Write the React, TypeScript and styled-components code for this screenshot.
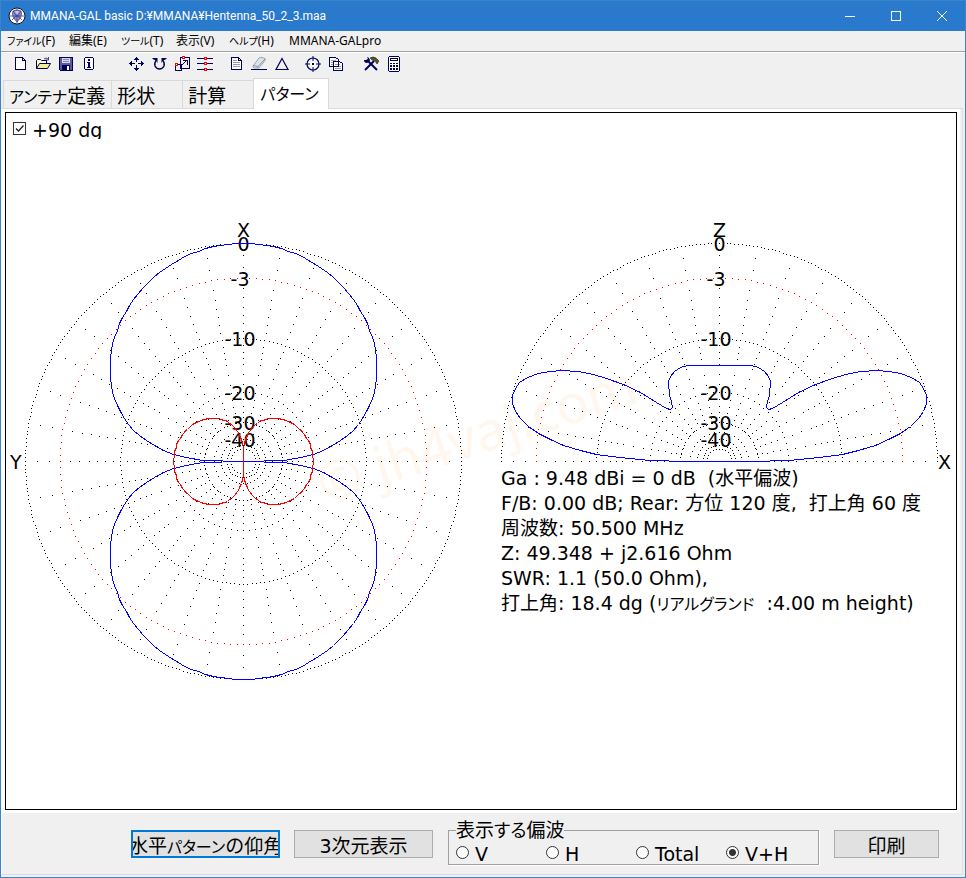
import React from "react";
import styled, { createGlobalStyle } from "styled-components";

const GlobalStyle = createGlobalStyle`
  *, *::before, *::after { box-sizing: border-box; }
  body { margin: 0; background: #f0f0f0; }
  button, input, fieldset, legend { font: inherit; color: inherit; }
`;

const uiFont = `"Noto Sans", "Noto Sans CJK JP", sans-serif`;
const dialogFont = `"DejaVu Sans", "Noto Sans CJK JP", sans-serif`;
const navy = "#000058";

const Window = styled.div`
  display: flex;
  flex-direction: column;
  min-height: 100vh;
  border: 1px solid #3a84cc;
  background: #f0f0f0;
  color: #000;
  font-family: ${dialogFont};
  font-size: 19px;
`;

const TitleBar = styled.header`
  display: flex;
  align-items: center;
  height: 30px;
  padding-left: 7px;
  background: #2979cc;
  color: #fff;
`;

const Title = styled.h1`
  flex: 1;
  margin: 0 0 0 4px;
  font: 400 12px/30px Roboto, "Noto Sans", sans-serif;
  white-space: nowrap;
`;

const CaptionButton = styled.button`
  display: grid;
  place-items: center;
  width: 46px;
  height: 30px;
  padding: 0;
  border: 0;
  background: none;
`;

const MenuBar = styled.nav`
  display: flex;
  gap: 14px;
  height: 21px;
  padding: 0 6px;
  border-bottom: 1px solid #a0a0a0;
  font: 12px/18px ${uiFont};
`;

const MenuItem = styled.button<{ $width: number }>`
  width: ${(p) => p.$width}px;
  padding: 0;
  border: 0;
  background: none;
  text-align: left;
  white-space: nowrap;
`;

const ToolBar = styled.div`
  display: flex;
  height: 26px;
  padding: 2px 0 0 7px;
  border-top: 1px solid #fff;
`;

const ToolGroup = styled.div<{ $gap: number }>`
  display: flex;
  margin-right: ${(p) => p.$gap}px;
`;

const ToolButton = styled.button`
  display: grid;
  place-items: center;
  width: 23px;
  height: 18px;
  padding: 0;
  border: 0;
  background: none;
`;

const TabList = styled.div`
  display: flex;
  align-items: flex-end;
  height: 30px;
  padding-left: 2px;
`;

const Tab = styled.button<{ $active?: boolean }>`
  min-width: ${(p) => (p.$active ? 76 : 71)}px;
  height: ${(p) => (p.$active ? 31 : 28)}px;
  margin-bottom: ${(p) => (p.$active ? -1 : 0)}px;
  padding: 0 6px ${(p) => (p.$active ? 3 : 0)}px;
  border: 1px solid #d9d9d9;
  border-bottom: 0;
  border-left-width: ${(p) => (p.$active ? 1 : 0)}px;
  border-right-width: ${(p) => (p.$active ? 1 : 0)}px;
  box-shadow: ${(p) => (p.$active ? "none" : "inset 1px 0 #d9d9d9")};
  background: ${(p) => (p.$active ? "#fff" : "#f0f0f0")};
  z-index: ${(p) => (p.$active ? 1 : 0)};
  text-align: left;
  white-space: nowrap;
`;

const TabPanel = styled.main`
  display: flex;
  flex: 1;
  flex-direction: column;
  margin: 0 2px 2px 0;
  border: 1px solid #dcdcdc;
  border-left-color: #fff;
  background: #f0f0f0;
`;

const Canvas = styled.section`
  position: relative;
  flex: 1;
  border: 1px solid #000;
  background: #fff;
  outline: 3px solid #fff;
  margin: 3px 5px 0 3px;
`;

const CheckLabel = styled.label`
  display: flex;
  gap: 5px;
  height: 26px;
  padding: 5px 0 0 7px;
  overflow: hidden;
  line-height: 24px;
`;

const CheckBox = styled.input`
  appearance: none;
  width: 13px;
  height: 13px;
  margin: 4px 0 0;
  border: 1px solid #333;
  background: #fff;
`;

const CheckStack = styled.span`
  display: grid;
  width: 14px;
  height: 18px;
  > * { grid-area: 1 / 1; }
  > svg { margin: 4px 0 0; pointer-events: none; z-index: 1; }
`;

const Plots = styled.div`
  display: grid;
  grid-template-columns: 482fr 468fr;
  padding-top: 81px;
`;

const Chart = styled.svg`
  display: block;
  width: 100%;
  overflow: visible;
  font-family: ${dialogFont};
  font-size: 19px;
`;

const Results = styled.div`
  padding-left: 13px;
  line-height: 25px;
  white-space: pre;
`;

const ResultLine = styled.p`
  margin: 0;
`;

const Kana = styled.span<{ $size?: number }>`
  font-size: ${(p) => p.$size ?? 16}px;
  font-feature-settings: "palt";
`;

const Watermark = styled.div`
  position: absolute;
  left: 32%;
  top: 290px;
  transform: rotate(-18deg);
  transform-origin: center;
  color: rgba(255, 128, 0, 0.07);
  font: 54px/60px "Noto Sans", sans-serif;
  white-space: nowrap;
  pointer-events: none;
`;

const Footer = styled.footer`
  display: flex;
  align-items: flex-start;
  height: 61px;
  margin-top: 3px;
  padding: 7px 0 0 129px;
`;

const PushButton = styled.button<{ $width: number; $focus?: boolean }>`
  display: flex;
  flex: none;
  align-items: center;
  justify-content: center;
  width: ${(p) => p.$width}px;
  height: 28px;
  margin-top: 10px;
  margin-right: 14px;
  padding: 0;
  overflow: hidden;
  border: ${(p) => (p.$focus ? "2px solid #0078d7" : "1px solid #adadad")};
  background: #e1e1e1;
  white-space: nowrap;
`;

const GroupBox = styled.fieldset`
  display: flex;
  flex: none;
  width: 371px;
  height: 45px;
  margin: 0 15px 0 1px;
  padding: 0 0 0 7px;
  border: 1px solid #a0a0a0;
  box-shadow: 1px 1px #fff;
`;

const GroupTitle = styled.legend`
  padding: 0;
  line-height: 20px;
`;

const RadioLabel = styled.label`
  display: flex;
  align-items: center;
  gap: 6px;
  width: 90px;
  height: 25px;
  line-height: 24px;
`;

const Radio = styled.input`
  appearance: none;
  flex: none;
  width: 13px;
  height: 13px;
  margin: 0 0 2px;
  border: 1px solid #333;
  border-radius: 50%;
  background: #fff;
  &:checked {
    background: radial-gradient(circle, #333 0 3px, #fff 4px);
  }
`;

/* ---------- polar chart geometry ---------- */

type Point = [number, number];
const RADIUS = 218;
const dbRadius = (db: number) => RADIUS * Math.exp(-0.0575 * db);
const rad = (deg: number) => (deg * Math.PI) / 180;

const dotPath = (points: Point[]) =>
  points.map(([x, y]) => `M${Math.floor(x)} ${Math.floor(y)}h1v1h-1z`).join("");

const ring = (cx: number, cy: number, db: number, step: number, sweep: number) => {
  const points: Point[] = [];
  for (let a = 0; a <= sweep; a += step) {
    points.push([cx + dbRadius(db) * Math.cos(rad(a)), cy - dbRadius(db) * Math.sin(rad(a))]);
  }
  return points;
};

const gridDots = (cx: number, cy: number, sweep: number) => {
  const points: Point[] = [
    ...ring(cx, cy, 0, 1, sweep),
    ...ring(cx, cy, 10, 2, sweep),
    ...ring(cx, cy, 20, 5, sweep),
    ...ring(cx, cy, 30, 6, sweep),
    ...ring(cx, cy, 40, 10, sweep),
    ...ring(cx, cy, 50, 15, sweep),
  ];
  for (let a = 0; a <= sweep; a += 10) {
    for (let db = 1; db < 50; db += db < 14 ? 1 : db < 30 ? 2 : 5) {
      const r = dbRadius(db);
      points.push([cx + r * Math.cos(rad(a)), cy - r * Math.sin(rad(a))]);
    }
  }
  return points;
};

const lobes = (cx: number, cy: number, horizontal: boolean) => {
  const points: string[] = [];
  for (let a = 0; a <= 360; a += 2) {
    const c = Math.abs(Math.cos(rad(a)));
    const shape = 1 - 0.03 * Math.sin(rad(2 * a)) ** 2;
    const r = RADIUS * Math.sqrt(c * (horizontal ? 0.102 : shape));
    const along = r * Math.cos(rad(a));
    const across = r * Math.sin(rad(a));
    const [x, y] = horizontal ? [along, across] : [across, -along];
    points.push(`${cx + Math.round(x)},${cy + Math.round(y)}`);
  }
  return points.join(" ");
};

const elevationHalf: Point[] = [
  [0, 0], [-33, 0], [-69, -1], [-100, -4], [-123, -7], [-139, -11], [-156, -16],
  [-169, -22], [-181, -28], [-191, -35], [-199, -43], [-204, -50], [-207, -58],
  [-207, -66], [-204, -73], [-200, -79], [-192, -84], [-181, -88], [-169, -90],
  [-158, -91], [-141, -90], [-126, -87], [-113, -83], [-96, -77], [-79, -69],
  [-63, -59], [-53, -53], [-49, -52], [-47, -54], [-48, -60], [-50, -66],
  [-51, -80], [-49, -85], [-45, -90], [-39, -94], [-32, -96], [0, -96],
];

const elevation = (cx: number, cy: number) =>
  [...elevationHalf, ...elevationHalf.map(([x, y]): Point => [-x, y]).reverse()]
    .map(([x, y]) => `${cx + x},${cy + y}`)
    .join(" ");

const levels: [string, number][] = [
  ["0", 0], ["-3", 3], ["-10", 10], ["-20", 20], ["-30", 30], ["-40", 40],
];

const LevelLabels = ({ cx, cy, axis }: { cx: number; cy: number; axis: string }) => (
  <g>
    <text x={cx} y={cy - 225} textAnchor="middle">{axis}</text>
    {levels.map(([label, db]) => (
      <text key={label} x={cx + (db < 10 ? 6 : 12)} y={cy - Math.round(dbRadius(db)) + 7} textAnchor="end">
        {label}
      </text>
    ))}
  </g>
);

const AzimuthChart = () => {
  const cx = 237.5;
  const cy = 241.5;
  return (
    <Chart viewBox="0 0 482 470" role="img" aria-label="X-Y">
      <g shapeRendering="crispEdges">
        <path d={dotPath(gridDots(cx, cy, 359))} fill="#000" />
        <path d={dotPath(ring(cx, cy, 3, 2, 359))} fill="#f00" />
      </g>
      <LevelLabels cx={cx} cy={cy} axis="X" />
      <text x="4" y="249">Y</text>
      <g fill="none" shapeRendering="crispEdges">
        <polyline points={lobes(cx, cy, false)} stroke="#00f" />
        <polyline points={lobes(cx, cy, true)} stroke="#f00" />
      </g>
    </Chart>
  );
};

const ElevationChart = () => {
  const cx = 231.5;
  const cy = 241.5;
  return (
    <Chart viewBox="0 0 468 246" role="img" aria-label="X-Z">
      <g shapeRendering="crispEdges">
        <path d={dotPath(gridDots(cx, cy, 180))} fill="#000" />
        <path d={dotPath(ring(cx, cy, 3, 2, 180))} fill="#f00" />
      </g>
      <LevelLabels cx={cx} cy={cy} axis="Z" />
      <text x="450" y="249">X</text>
      <polyline points={elevation(cx, cy)} fill="none" stroke="#00f" shapeRendering="crispEdges" />
    </Chart>
  );
};

/* ---------- icons ---------- */

const Icon = ({ children, smooth }: { children: React.ReactNode; smooth?: boolean }) => (
  <svg width="16" height="16" viewBox="0 0 16 16" fill="none" stroke={navy} shapeRendering={smooth ? "auto" : "crispEdges"} aria-hidden="true">
    {children}
  </svg>
);

const icons: Record<string, React.ReactNode> = {
  新規: <Icon><path d="M3.5 1.5h7l3 3v9h-10zM10.5 1.5v3h3" fill="#fff" /></Icon>,
  開く: (
    <Icon smooth>
      <path d="M1.5 12.5v-8l1-1h3l1 1h5v3" fill="#ffffc0" />
      <path d="M1.5 12.5l3-5h11l-3 5z" fill="#f4f09a" />
      <path d="M9 3q2-2 4 0M13.5 1v3h-3" strokeWidth=".7" />
    </Icon>
  ),
  保存: (
    <Icon>
      <path d="M1.5 1.5h13v13h-12l-1-1z" fill="#5a5a9c" />
      <path d="M4 2h8v5H4z" fill="#d8d8e8" stroke="none" />
      <path d="M5 3.5h6M5 5.5h6" stroke="#8888a8" />
      <path d="M4 9h8v5H4z" fill={navy} stroke="none" />
      <path d="M9 10h2v4H9z" fill="#fff" stroke="none" />
    </Icon>
  ),
  情報: (
    <Icon>
      <path d="M4.5 1.5h7l1 1v10l-1 1h-7l-1-1v-10z" fill="#fff" />
      <path d="M7 3h2v2H7zM6 6h3v5h1v1H6v-1h1V7H6z" fill={navy} stroke="none" />
    </Icon>
  ),
  移動: (
    <Icon>
      <path d="M8.5 1v5M8.5 9v6M1 7.5h6M10 7.5h6M7 2.5h3M6 3.5h5M7 13.5h3M6 12.5h5M2.5 6v3M3.5 5v5M14.5 6v3M13.5 5v5" />
    </Icon>
  ),
  回転: (
    <Icon smooth>
      <path d="M5.500 4q-2.500 3-1.500 6 1.500 3 4.500 3t4.500-3q1-3-1.500-6" strokeWidth="1.400" />
      <path d="M1 2h5.500v5L5 4.500 2.500 3.500zM16 2h-5.500v5L12 4.500l2.500-1z" fill={navy} stroke="none" />
    </Icon>
  ),
  拡大: (
    <Icon>
      <path d="M6.500 1.500h9v11h-9zM1.500 8.500h6v6h-6z" />
      <path d="M8 9l4-4M9 4.500h4v4" />
      <path d="M8.500.5h2v2h-2zM1.500 7.500h2v2h-2z" fill="#fff" stroke="#f00" />
    </Icon>
  ),
  要素: (
    <Icon>
      <path d="M0 2.500h16M0 7.500h16M0 13.500h16" />
      <path d="M7.500 1.500h2v2h-2zM7.500 6.500h2v2h-2zM7.500 12.500h2v2h-2z" fill="#fff" stroke="#f00" />
    </Icon>
  ),
  文書: (
    <Icon>
      <path d="M3.500 1.500h7l3 3v9h-10zM10.500 1.500v3h3" fill="#fff" />
      <path d="M5 4.500h4M5 6.500h7M5 8.500h7M5 10.500h7" stroke="#9a9ab8" />
    </Icon>
  ),
  消去: (
    <Icon smooth>
      <path d="M2 10l6-8q1-1 3-.5l3 1q1 .5 0 2l-6 7.500H3.500q-2-.5-1.500-2z" fill="#dce4e8" stroke="#99a6ae" />
      <path d="M2 9.500l5 1L14 3M7 10.500v1.500" stroke="#8895a0" />
      <path d="M0 13.500h16" />
    </Icon>
  ),
  三角: <Icon smooth><path d="M8 2.500l6 11H2z" strokeWidth="1.200" /></Icon>,
  中心: (
    <Icon smooth>
      <circle cx="8" cy="8" r="6" strokeWidth="1.200" fill="#f8f8f8" />
      <path d="M8 0v5M8 11v5M0 8h5M11 8h5" />
      <path d="M7 7h2v2H7z" fill="#000" stroke="none" />
    </Icon>
  ),
  コピー: (
    <Icon>
      <path d="M1.500 1.500h6l3 2v7h-9z" fill="#f8f8f8" />
      <path d="M3 4.500h5M3 6.500h5M3 8.500h5" stroke="#9a9ab8" />
      <path d="M5.500 5.500h6l3 2v7h-9z" fill="#fff" />
      <path d="M7 8.500h5M7 10.500h6M7 12.500h6" stroke="#9a9ab8" />
      <path d="M5.500 5v5.500h5V5" />
    </Icon>
  ),
  設定: (
    <Icon smooth>
      <path d="M2 14l9-9" strokeWidth="2" />
      <path d="M4 4l10 10" strokeWidth="2" />
      <path d="M1 4q0 3 3 3 3-1 3-3-1-3-3-3l1 2-2 1z" fill={navy} stroke="none" />
      <path d="M7 2q3-2 6 0l3 3-2 3-2-3-3-1z" fill="#555520" stroke="#222" strokeWidth=".6" />
    </Icon>
  ),
  電卓: (
    <Icon>
      <path d="M3.500.5h9l1 1v13l-1 1h-9l-1-1v-13z" fill="#fff" />
      <path d="M4.500 2.500h7v2h-7z" fill="#fff" />
      <path d="M4 7h2v1H4zM7 7h2v1H7zM10 7h2v1h-2zM4 9h2v2H4zM7 9h2v2H7zM10 9h2v2h-2zM4 12h2v2H4zM7 12h2v2H7zM10 12h2v2h-2z" fill={navy} stroke="none" />
    </Icon>
  ),
};

const toolGroups: { names: string[]; gap: number }[] = [
  { names: ["新規", "開く", "保存", "情報"], gap: 24 },
  { names: ["移動", "回転", "拡大", "要素"], gap: 8 },
  { names: ["文書", "消去", "三角"], gap: 8 },
  { names: ["中心", "コピー"], gap: 12 },
  { names: ["設定", "電卓"], gap: 0 },
];

const AppLogo = () => (
  <svg width="18" height="18" viewBox="0 0 18 18" aria-hidden="true">
    <circle cx="9" cy="9" r="8" fill="#fff" stroke="#101030" />
    <path d="M9 15Q3 9 5 4q4-2 8 0 2 5-4 11z" fill="#8c8cd8" stroke="#33336c" strokeWidth=".7" />
    <path d="M5 4l4 6 4-6M2 9h14M9 2v14M4 13l5-5 5 5" fill="none" stroke="#44447c" strokeWidth=".8" />
    <path d="M7 4h4l-2 4z" fill="#c6c6ff" />
  </svg>
);

/* Katakana is set smaller than kanji; the rest of a label keeps the full size. */
const Label = ({ text, kanaSize }: { text: string; kanaSize?: number }) => (
  <span>
    {text.split(/([ァ-ヶー]+)/).map((part, i) =>
      i % 2 ? <Kana key={i} $size={kanaSize}>{part}</Kana> : part,
    )}
  </span>
);

const menus: [string, number][] = [
  ["ファイル(F)", 48], ["編集(E)", 38], ["ツール(T)", 41], ["表示(V)", 39], ["ヘルプ(H)", 46], ["MMANA-GALpro", 96],
];

const tabs = ["アンテナ定義", "形状", "計算", "パターン"];
const polarizations = ["V", "H", "Total", "V+H"];

const results = [
  "Ga : 9.48 dBi = 0 dB  (水平偏波)",
  "F/B: 0.00 dB; Rear: 方位 120 度,  打上角 60 度",
  "周波数: 50.500 MHz",
  "Z: 49.348 + j2.616 Ohm",
  "SWR: 1.1 (50.0 Ohm),",
  "打上角: 18.4 dg (リアルグランド  :4.00 m height)",
];

export default function App() {
  const [tab, setTab] = React.useState("パターン");
  const [polarization, setPolarization] = React.useState("V+H");
  const [rotated, setRotated] = React.useState(true);

  return (
    <>
      <GlobalStyle />
      <Window>
        <TitleBar>
          <AppLogo />
          <Title>MMANA-GAL basic D:¥MMANA¥Hentenna_50_2_3.maa</Title>
          <CaptionButton aria-label="最小化">
            <svg width="12" height="12" stroke="#fff"><path d="M1 6.500h10" shapeRendering="crispEdges" /></svg>
          </CaptionButton>
          <CaptionButton aria-label="最大化">
            <svg width="12" height="12" fill="none" stroke="#fff"><path d="M1.500 1.500h9v9h-9z" shapeRendering="crispEdges" /></svg>
          </CaptionButton>
          <CaptionButton aria-label="閉じる">
            <svg width="12" height="12" stroke="#fff"><path d="M1 1l10 10M11 1L1 11" /></svg>
          </CaptionButton>
        </TitleBar>
        <MenuBar>
          {menus.map(([label, width]) => (
            <MenuItem key={label} $width={width}><Label text={label} kanaSize={10} /></MenuItem>
          ))}
        </MenuBar>
        <ToolBar role="toolbar">
          {toolGroups.map((group) => (
            <ToolGroup key={group.names[0]} $gap={group.gap}>
              {group.names.map((name) => (
                <ToolButton key={name} aria-label={name}>{icons[name]}</ToolButton>
              ))}
            </ToolGroup>
          ))}
        </ToolBar>
        <TabList role="tablist">
          {tabs.map((name) => (
            <Tab key={name} role="tab" aria-selected={tab === name} $active={tab === name} onClick={() => setTab(name)}>
              <Label text={name} />
            </Tab>
          ))}
        </TabList>
        <TabPanel>
          <Canvas>
            <CheckLabel>
              <CheckStack>
                <CheckBox type="checkbox" checked={rotated} onChange={(e) => setRotated(e.target.checked)} />
                {rotated && (
                  <svg width="13" height="13" fill="none" stroke="#222" strokeWidth="1.300" aria-hidden="true">
                    <path d="M3 6.500l2.500 2.500 5-5.500" />
                  </svg>
                )}
              </CheckStack>
              <span>+90 dg</span>
            </CheckLabel>
            <Plots>
              <AzimuthChart />
              <div>
                <ElevationChart />
                <Results>
                  {results.map((line) => (
                    <ResultLine key={line}><Label text={line} /></ResultLine>
                  ))}
                </Results>
              </div>
            </Plots>
            <Watermark>© jh4vaj.com</Watermark>
          </Canvas>
          <Footer>
            <PushButton $width={149} $focus><Label text="水平パターンの仰角" /></PushButton>
            <PushButton $width={139}>3次元表示</PushButton>
            <GroupBox>
              <GroupTitle>表示<Kana $size={18}>する</Kana>偏波</GroupTitle>
              {polarizations.map((name) => (
                <RadioLabel key={name}>
                  <Radio type="radio" name="polarization" checked={polarization === name} onChange={() => setPolarization(name)} />
                  {name}
                </RadioLabel>
              ))}
            </GroupBox>
            <PushButton $width={105}>印刷</PushButton>
          </Footer>
        </TabPanel>
      </Window>
    </>
  );
}
